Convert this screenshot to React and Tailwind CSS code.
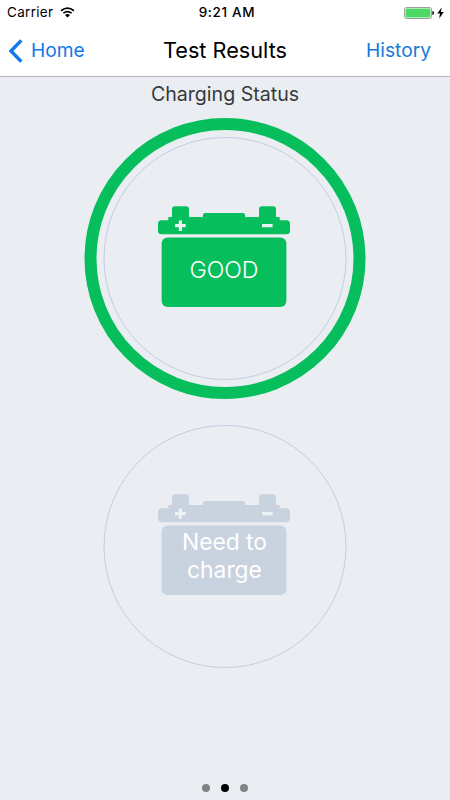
import { useState } from "react";

function Battery({ className }) {
    return (
        <svg viewBox="0 0 132 101" className={`col-start-1 row-start-1 h-[101px] w-[132px] ${className}`} fill="currentColor">
            <path d="M3.5 14.3H10.3V11.6Q10.3 11 11 11H14V3.2Q14 .2 17 .2H28Q31 .2 31 3.2V11H45V8.8Q45 7 47 7H85Q87 7 87 8.8V11H101V3.2Q101 .2 104 .2H115Q118 .2 118 3.2V11H121Q121.7 11 121.7 11.6V14.3H128.5Q132 14.3 132 17.8V24.8Q132 28.3 128.5 28.3H3.5Q0 28.3 0 24.8V17.8Q0 14.3 3.5 14.3Z" />
            <rect x="3.6" y="31.6" width="124.8" height="69.4" rx="6" />
            <path d="M22.4 14.4V25M17.1 19.7H27.7M104 19.7H114.6" stroke="#edf2f5" strokeWidth="3.2" />
        </svg>
    );
}

export default function App() {
    const [page, setPage] = useState(1);

    return (
        <div className="flex h-[800px] w-[450px] flex-col overflow-hidden bg-[#eaeef3] font-['Inter','Liberation_Sans',sans-serif]">
            <header className="h-[77px] border-b border-[#b5b6b8] bg-white">
                <div className="grid h-[25px] grid-cols-3 items-center pr-[6px] pl-[7px] text-[13.5px] leading-[25px] text-black">
                    <div className="flex items-center gap-[7px]">
                        <span className="tracking-[0.3px]">Carrier</span>
                        <svg viewBox="0 0 16 12" className="h-[11px] w-[15px]" fill="none" stroke="black" strokeWidth="1.8">
                            <path d="M1 4.1Q8-1.7 15 4.1M3.5 6.8Q8 3.1 12.5 6.8" />
                            <path d="M5.3 8.6Q8 6.6 10.7 8.6L8 11.4Z" fill="black" stroke="none" />
                        </svg>
                    </div>
                    <span className="pl-[3px] text-center text-[13.5px] font-medium tracking-[0.65px] whitespace-nowrap">9:21 AM</span>
                    <div className="flex items-center justify-end gap-[3px]">
                        <svg viewBox="0 0 30 12" className="h-[12px] w-[30px]">
                            <rect x=".5" y=".5" width="27" height="11" rx="2" fill="white" stroke="#7f8a80" strokeWidth=".8" />
                            <rect x="1.6" y="1.6" width="24.8" height="8.8" rx="1" fill="#4bd964" />
                            <path d="M28.4 4Q30 4.2 30 6T28.4 8Z" fill="black" />
                        </svg>
                        <svg viewBox="0 0 7 12" className="h-[12px] w-[7px]">
                            <path d="M4.6.5L.3 6.6H3L2.2 11.5L6.8 5.1H4Z" fill="black" />
                        </svg>
                    </div>
                </div>
                <div className="grid h-[51px] grid-cols-[1fr_auto_1fr] items-center px-[9px] text-[19.2px] leading-[51px]">
                    <button type="button" className="flex items-center gap-[8px] text-[#1479e8]">
                        <svg viewBox="0 0 14 24" className="h-[24px] w-[14px]" fill="none" stroke="currentColor" strokeWidth="3.5">
                            <path d="M12.3 1.4L2 12L12.3 22.6" />
                        </svg>
                        <span>Home</span>
                    </button>
                    <h1 className="text-[21.7px] text-black">Test Results</h1>
                    <button type="button" className="pr-[10px] text-right text-[#1479d8]">History</button>
                </div>
            </header>

            <main className="flex flex-1 flex-col items-center">
                <h2 className="h-[41px] pt-[3px] text-[19.6px] leading-[28px] text-[#37393c]">Charging Status</h2>

                <section className="mr-px flex size-[281px] translate-x-[0.5px] items-center justify-center rounded-full border-[12px] border-[#06be5b]">
                    <div className="grid size-[243px] place-items-center rounded-full border border-[#c3cde0]">
                        <Battery className="-translate-x-[1.5px] -translate-y-[2px] text-[#06be5b]" />
                        <span className="col-start-1 row-start-1 -translate-x-[1px] translate-y-[11px] text-[23.2px] leading-[28px] font-light text-white">GOOD</span>
                    </div>
                </section>

                <section className="mt-[26px] mr-px grid size-[243px] translate-x-[0.5px] place-items-center rounded-full border border-[#c3cde0]">
                    <Battery className="-translate-x-[1.5px] -translate-y-[2px] text-[#c9d2df]" />
                    <span className="col-start-1 row-start-1 -translate-x-[0.5px] translate-y-[9px] text-center text-[22.8px] leading-[28px] text-white">
                        Need to
                        <br />
                        charge
                    </span>
                </section>

                <nav className="mt-auto mb-[8px] flex gap-[11px]">
                    {[0, 1, 2].map((i) => (
                        <button
                            key={i}
                            type="button"
                            aria-label={`Page ${i + 1}`}
                            onClick={() => setPage(i)}
                            className={`size-[8px] rounded-full ${i === page ? "bg-black" : "bg-[#808286]"}`}
                        />
                    ))}
                </nav>
            </main>
        </div>
    );
}
